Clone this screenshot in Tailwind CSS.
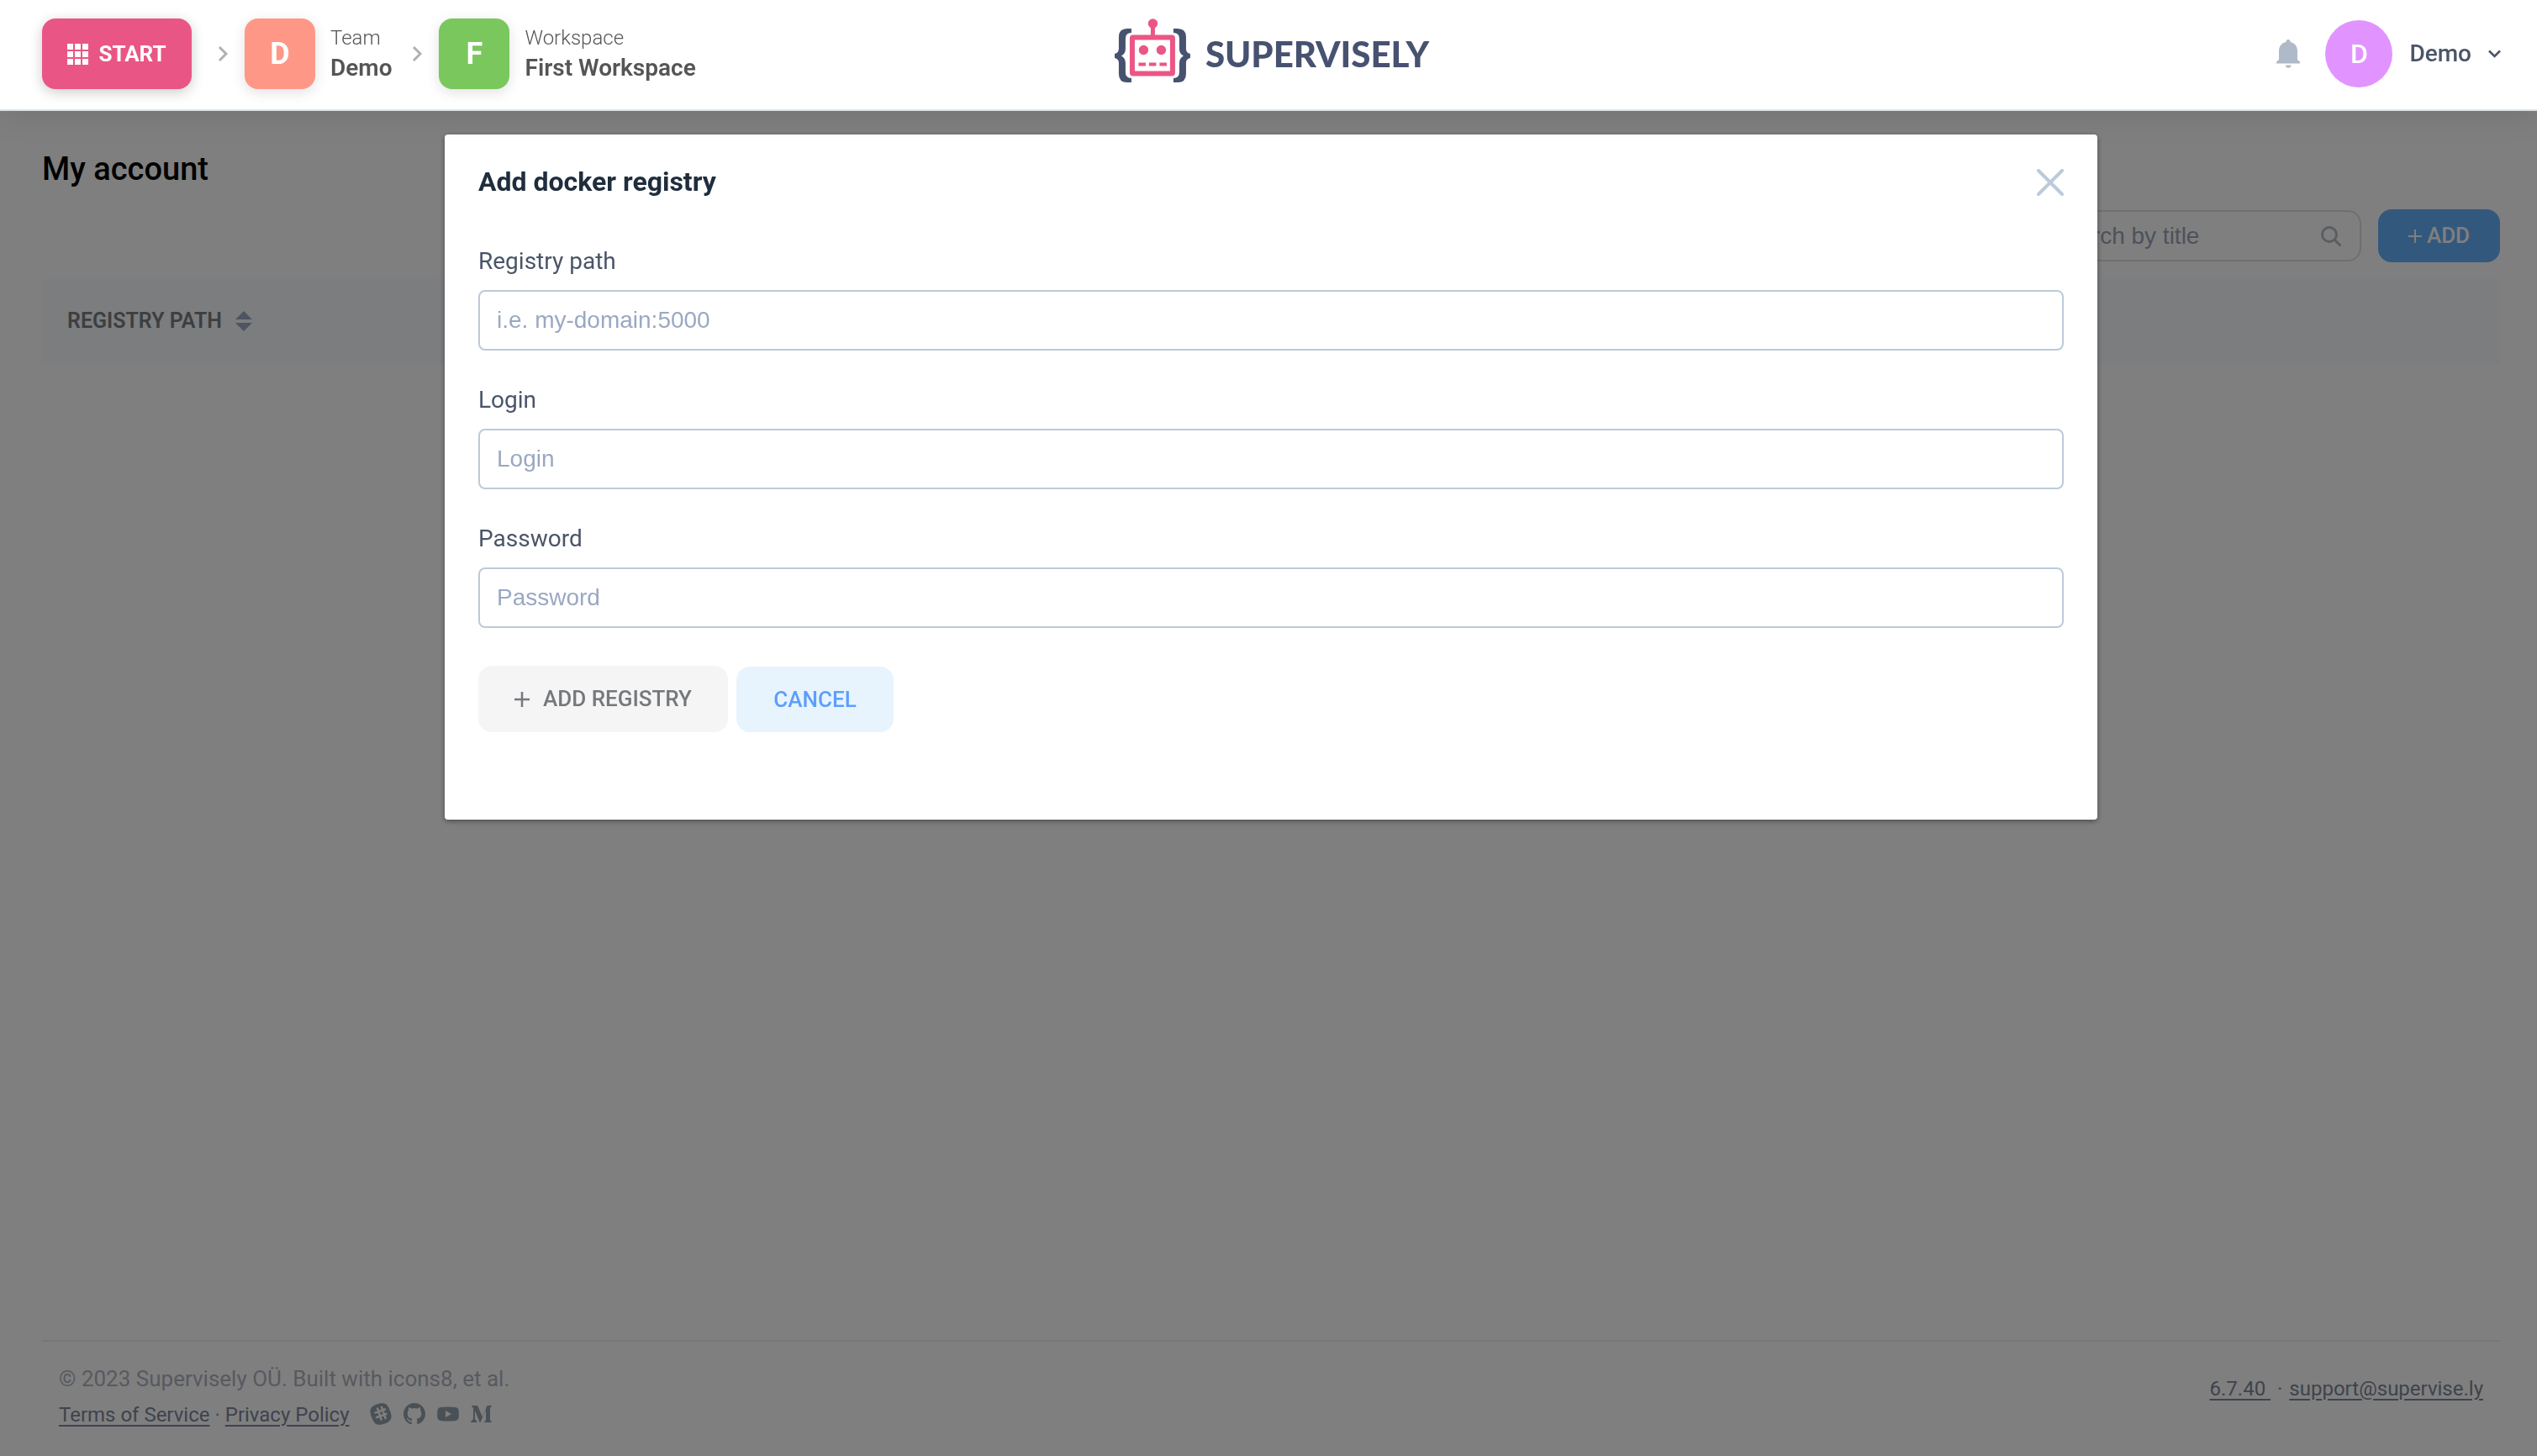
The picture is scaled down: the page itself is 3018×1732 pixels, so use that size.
<!DOCTYPE html>
<html lang="en">
<head>
<meta charset="utf-8">
<title>Supervisely – My account</title>
<script src="https://cdn.jsdelivr.net/npm/@tailwindcss/browser@4"></script>
</head>
<body class="flex min-h-screen flex-col bg-white font-['Roboto',sans-serif] text-[28px]">

<header class="relative z-20 flex h-[132px] items-center justify-between border-b-2 border-[#dce3e7] bg-white pr-[42px] pb-[2px] pl-[50px] shadow-[0_0_40px_rgba(0,0,0,0.12)]">
  <nav class="flex items-center" aria-label="Breadcrumb">
    <button type="button" class="flex h-[84px] w-[178px] items-center justify-center gap-3 rounded-2xl bg-[#e95685] text-[26px] font-bold text-white shadow-[0_4px_16px_rgba(0,0,0,0.2)]">
      <svg class="size-[25px]" viewBox="0 0 25 25" fill="currentColor" aria-hidden="true"><path d="M0 0h7v7H0zM9 0h7v7H9zM18 0h7v7h-7zM0 9h7v7H0zM9 9h7v7H9zM18 9h7v7h-7zM0 18h7v7H0zM9 18h7v7H9zM18 18h7v7h-7z"/></svg>
      START
    </button>
    <svg class="mx-5 h-6 w-[23px]" viewBox="0 0 23 24" fill="none" stroke="#b0b0b0" stroke-width="3" aria-hidden="true"><path d="M13 4l8 8-8 8"/></svg>
    <a href="#" class="flex items-center gap-[18px] text-[#555]">
      <span class="flex size-[84px] items-center justify-center rounded-2xl bg-[#ff9787] text-[36px] font-bold text-white shadow-[0_4px_16px_rgba(0,0,0,0.12)]">D</span>
      <span class="flex flex-col pb-[2px]"><span class="text-[24px] leading-9 font-light">Team</span><span class="leading-9 font-semibold">Demo</span></span>
    </a>
    <svg class="mx-5 h-6 w-4" viewBox="0 0 16 24" fill="none" stroke="#b0b0b0" stroke-width="3" aria-hidden="true"><path d="M6 4l8 8-8 8"/></svg>
    <a href="#" class="flex items-center gap-[18px] text-[#555]">
      <span class="flex size-[84px] items-center justify-center rounded-2xl bg-[#7ac75d] text-[36px] font-bold text-white shadow-[0_4px_16px_rgba(0,0,0,0.12)]">F</span>
      <span class="flex flex-col pb-[2px]"><span class="text-[24px] leading-9 font-light">Workspace</span><span class="leading-9 font-semibold">First Workspace</span></span>
    </a>
  </nav>

  <a href="#" class="absolute top-[22px] left-1/2 flex -translate-x-1/2 items-center gap-[18px] pl-2 text-[#475270]">
    <svg class="h-[76px] w-[90px]" viewBox="0 0 90 76" aria-hidden="true">
      <g fill="#475270"><path d="M20 12h-5Q5 12 5 22v14q0 5-5 6v5q5 1 5 6v13q0 10 10 10h5v-5q-7 0-7-7V53q0-6-5-8.500q5-2.500 5-8.500V24q0-7 7-7z"/><path d="M70 12h5q10 0 10 10v14q0 5 5 6v5q-5 1-5 6v13q0 10-10 10h-5v-5q7 0 7-7V53q0-6 5-8.500q-5-2.500-5-8.500V24q0-7-7-7z"/></g>
      <g fill="#eb5685"><circle cx="45.500" cy="6" r="5.700"/><path d="M43 9h5v12h-5z"/><circle cx="34.500" cy="37.500" r="5.700"/><circle cx="55.500" cy="37.500" r="5.700"/><path d="M28.500 52.500H37v4h-8.500zM41 52.500h8.500v4H41zM53.500 52.500H62v4h-8.500z"/></g>
      <rect x="21" y="22.500" width="48" height="43" rx="1" fill="none" stroke="#eb5685" stroke-width="6"/>
    </svg>
    <span class="pt-2 font-['Lato',sans-serif] text-[42px] leading-[60px] font-black">SUPERVISELY</span>
  </a>

  <div class="flex items-center">
    <button type="button" aria-label="Notifications" class="mr-[30px]">
      <svg class="block h-[34px] w-7" viewBox="0 0 28 34" fill="#aebac8" aria-hidden="true"><path d="M14 0a2.500 2.500 0 0 1 2.500 3C21.500 4 25 8 25 13.500V24l3 2.500V28.500H0V26.500L3 24V13.500C3 8 6.500 4 11.500 3A2.500 2.500 0 0 1 14 0zM11 30.500h6.500a3.200 3.200 0 0 1-6.500 0z"/></svg>
    </button>
    <button type="button" class="flex items-center font-medium text-[#4a5568]">
      <span class="mr-5 flex size-20 items-center justify-center rounded-full bg-[#e194ff] text-[32px] text-white">D</span>
      Demo
      <svg class="ml-[18px] h-6 w-[18px]" viewBox="0 0 18 24" fill="none" stroke="currentColor" stroke-width="2.500" aria-hidden="true"><path d="M3 8.500l6.500 6.500L16 8.500"/></svg>
    </button>
  </div>
</header>

<main class="flex flex-1 flex-col pt-11 pr-11 pl-[50px]">
  <h1 class="h-[49px] text-[38px] leading-[50px] font-medium text-black">My account</h1>
  <div class="mt-6 flex items-center justify-end gap-5">
    <label class="flex h-[61px] w-[394px] items-center rounded-2xl border-2 border-[#dcdfe6] px-[22px]">
      <input type="search" placeholder="Search by title" aria-label="Search by title" class="min-w-0 flex-1 font-['Liberation_Sans',sans-serif] text-[#606266] outline-none placeholder:text-[#9aa3b8]">
      <svg class="size-6" viewBox="0 0 24 24" fill="none" stroke="#b4bcc6" stroke-width="3" stroke-linecap="round" aria-hidden="true"><circle cx="10" cy="10" r="8.500"/><path d="M16.500 16.500l6 6"/></svg>
    </label>
    <button type="button" class="flex h-[63px] w-[145px] items-center justify-center gap-[6px] rounded-2xl bg-[#67b0fa] text-[26px] font-medium text-white">
      <svg class="size-4" viewBox="0 0 16 16" fill="none" stroke="currentColor" stroke-width="2" aria-hidden="true"><path d="M8 0v16M0 8h16"/></svg>
      ADD
    </button>
  </div>
  <table class="mt-5 w-full">
    <thead><tr class="h-[100px] bg-[#f7fafe]"><th scope="col" class="px-[30px] text-left">
      <button type="button" class="flex items-center gap-4 text-[25px] font-semibold text-[#7d7d80]">REGISTRY PATH
        <svg class="h-6 w-5" viewBox="0 0 20 24" fill="#9ca8c4" aria-hidden="true"><path d="M10 0l10 10H0zM10 24L0 14h20z"/></svg>
      </button></th></tr></thead>
  </table>
</main>

<footer class="mr-11 ml-[50px] flex h-[138px] justify-between border-t-2 border-[#eee] px-5 pt-[23px] text-[24px] text-[#8590a6]">
  <div>
    <p class="text-[26px] leading-[42px] text-[#b0b3c0]">© 2023 Supervisely OÜ. Built with icons8, et al.</p>
    <div class="flex items-center leading-[44px]">
      <a href="#" class="text-[#7d879b] underline underline-offset-4">Terms of Service</a><span class="px-[6px]">·</span><a href="#" class="text-[#7d879b] underline underline-offset-4">Privacy Policy</a>
      <div class="ml-6 flex items-center gap-[14px] pb-[2px]">
        <a href="#" aria-label="Slack"><svg class="block size-[26px]" viewBox="0 0 26 26" aria-hidden="true"><path fill="#92a2ae" d="M8 1.500C17-1 20 0 23 7c4 9 4 14-5 17.500C9 27 6 26 3 19-1 10-1 5 8 1.500z"/><path fill="none" stroke="#fff" stroke-width="2.400" stroke-linecap="round" d="M9 6.500l4.500 13M14 5l4.500 13M6.500 11.500L18 7.500M8 17l11.500-4"/></svg></a>
        <a href="#" aria-label="GitHub"><svg class="block size-[26px]" viewBox="0 0 16 16" fill="#92a2ae" aria-hidden="true"><path d="M8 0C3.580 0 0 3.580 0 8c0 3.540 2.290 6.530 5.470 7.590.4.070.55-.17.55-.38 0-.19-.01-.82-.01-1.490-2.010.37-2.530-.49-2.690-.94-.09-.23-.48-.94-.82-1.130-.28-.15-.68-.52-.01-.53.63-.01 1.080.58 1.230.82.72 1.210 1.870.87 2.330.66.070-.52.28-.87.51-1.070-1.780-.2-3.640-.89-3.640-3.950 0-.87.31-1.590.82-2.150-.08-.2-.36-1.020.08-2.120 0 0 .67-.21 2.200.82.64-.18 1.320-.27 2-.27s1.360.09 2 .27c1.530-1.040 2.200-.82 2.200-.82.44 1.100.16 1.920.08 2.120.51.56.82 1.270.82 2.150 0 3.070-1.870 3.750-3.650 3.950.29.25.54.73.54 1.480 0 1.070-.01 1.930-.01 2.200 0 .21.15.46.55.38A8.010 8.010 0 0 0 16 8c0-4.420-3.580-8-8-8z"/></svg></a>
        <a href="#" aria-label="YouTube"><svg class="block size-[26px]" viewBox="0 0 26 26" fill="#92a2ae" fill-rule="evenodd" aria-hidden="true"><path d="M4 5q9-1 18 0 3 .3 3.500 3 .7 5 0 10-.5 2.700-3.500 3-9 1-18 0-3-.3-3.500-3-.7-5 0-10Q1 5.300 4 5zM10 9v8l7-4z"/></svg></a>
        <a href="#" aria-label="Medium"><svg class="block size-[26px]" viewBox="0 0 26 26" fill="#92a2ae" aria-hidden="true"><path d="M1 3h7l6 13.500L19.500 3H25v.8l-2 1.700v15l2 1.700v.8h-9v-.8l2-1.700V8l-6.500 15h-.8L5 9v10l2.500 3.200v.8H0v-.8L3 19V6L1 3.800z"/></svg></a>
      </div>
    </div>
  </div>
  <div class="flex h-[66px] items-center text-[#7d879b]"><a href="#" class="underline underline-offset-4">6.7.40&nbsp;</a><span class="px-2">·</span><a href="#" class="underline underline-offset-4">support@supervise.ly</a></div>
</footer>

<div class="fixed inset-0 z-10 bg-black/50 pt-40 pr-[523px] pl-[529px]">
  <section role="dialog" aria-modal="true" aria-labelledby="dialog-title" class="rounded-[4px] bg-white px-10 pt-9 pb-[104px] shadow-[0_2px_6px_rgba(0,0,0,0.4)]">
    <div class="flex h-[42px] items-center justify-between">
      <h2 id="dialog-title" class="pb-[2px] text-[32px] font-bold text-[#1f2d3d]">Add docker registry</h2>
      <button type="button" aria-label="Close"><svg class="block size-8" viewBox="0 0 32 32" fill="none" stroke="#bccada" stroke-width="4" stroke-linecap="round" aria-hidden="true"><path d="M2 2l28 28M30 2L2 30"/></svg></button>
    </div>
    <form class="mt-[53px]">
      <div class="flex flex-col gap-[39px] text-[#4a5568]">
        <div>
          <label for="path" class="block h-[54px] leading-[40px]">Registry path</label>
          <input id="path" type="text" placeholder="i.e. my-domain:5000" class="block h-[72px] w-full rounded-lg border-2 border-[#bccada] px-5 font-['Liberation_Sans',sans-serif] outline-none placeholder:text-[#9aa8c3]">
        </div>
        <div>
          <label for="login" class="block h-[54px] leading-[40px]">Login</label>
          <input id="login" type="text" placeholder="Login" class="block h-[72px] w-full rounded-lg border-2 border-[#bccada] px-5 font-['Liberation_Sans',sans-serif] outline-none placeholder:text-[#9aa8c3]">
        </div>
        <div>
          <label for="password" class="block h-[54px] leading-[40px]">Password</label>
          <input id="password" type="password" placeholder="Password" class="block h-[72px] w-full rounded-lg border-2 border-[#bccada] px-5 font-['Liberation_Sans',sans-serif] outline-none placeholder:text-[#9aa8c3]">
        </div>
      </div>
      <div class="mt-[45px] flex items-end gap-[10px] text-[26px] font-medium">
        <button type="submit" class="flex h-[79px] w-[297px] items-center justify-center gap-4 rounded-2xl bg-[#f5f5f5] text-[#75787c]">
          <svg class="size-[18px]" viewBox="0 0 18 18" fill="none" stroke="currentColor" stroke-width="2.500" aria-hidden="true"><path d="M9 0v18M0 9h18"/></svg>
          ADD REGISTRY
        </button>
        <button type="button" class="h-[78px] w-[187px] rounded-2xl bg-[#e7f4fe] text-[#5e9efb]">CANCEL</button>
      </div>
    </form>
  </section>
</div>
</body>
</html>
